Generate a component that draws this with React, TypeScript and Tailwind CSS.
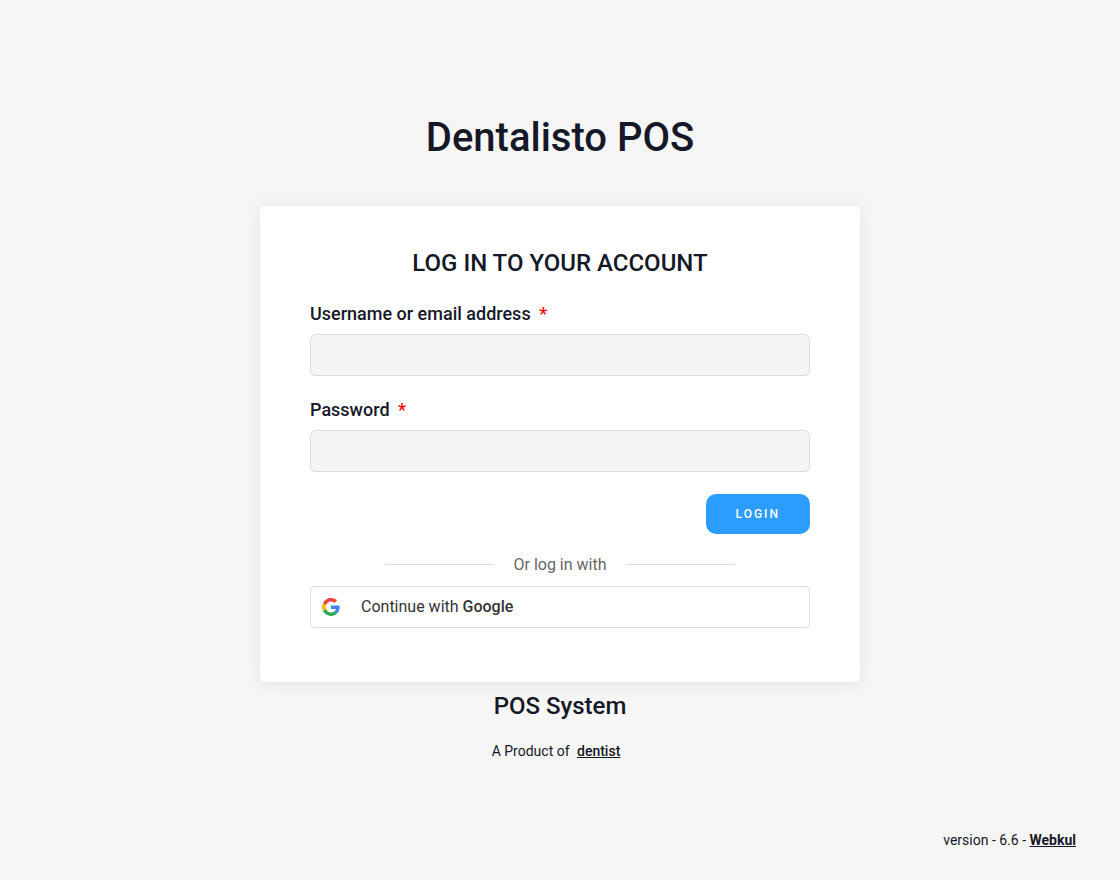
import { useState } from 'react'
import type { FormEvent } from 'react'

type FieldProps = {
  id: string
  label: string
  type: string
  value: string
  onChange: (value: string) => void
}

function Field({ id, label, type, value, onChange }: FieldProps) {
  return (
    <div>
      <label htmlFor={id} className="mb-2 block text-lg leading-6 font-medium">
        {label} <span className="ml-1 text-[#f00]">*</span>
      </label>
      <input
        id={id}
        type={type}
        value={value}
        onChange={e => onChange(e.target.value)}
        className="block h-[42px] w-full rounded-[5px] border border-[#ddd] bg-[#f5f5f5] px-3 outline-none"
      />
    </div>
  )
}

function GoogleIcon() {
  return (
    <svg viewBox="-2.7 -2.7 53.4 53.4" className="h-5 w-5" aria-hidden="true">
      <path fill="#ea4335" d="M24 9.5c3.54 0 6.71 1.22 9.21 3.6l6.85-6.85C35.9 2.38 30.47 0 24 0 14.62 0 6.51 5.38 2.56 13.22l7.98 6.19C12.43 13.72 17.74 9.5 24 9.5z" />
      <path fill="#4285f4" d="M46.98 24.55c0-1.57-.15-3.09-.38-4.55H24v9.02h12.94c-.58 2.96-2.26 5.48-4.78 7.18l7.73 6c4.51-4.18 7.09-10.36 7.09-17.65z" />
      <path fill="#fbbc05" d="M10.53 28.59c-.48-1.45-.76-2.99-.76-4.59s.27-3.14.76-4.59l-7.98-6.19C.92 16.46 0 20.12 0 24c0 3.88.92 7.54 2.56 10.78l7.97-6.19z" />
      <path fill="#34a853" d="M24 48c6.48 0 11.93-2.13 15.89-5.81l-7.73-6c-2.15 1.45-4.92 2.3-8.16 2.3-6.26 0-11.57-4.22-13.47-9.91l-7.98 6.19C6.51 42.62 14.62 48 24 48z" />
    </svg>
  )
}

export default function App() {
  const [username, setUsername] = useState('')
  const [password, setPassword] = useState('')

  function handleSubmit(e: FormEvent) {
    e.preventDefault()
  }

  return (
    <div className="flex min-h-screen flex-col bg-[#f6f6f6] px-4 font-[Roboto,sans-serif] text-[#151826]">
      <main className="mx-auto w-full max-w-[600px] flex-1 pt-28">
        <h1 className="mb-[42px] text-center text-[40px] leading-[52px] font-medium">Dentalisto POS</h1>

        <div className="rounded-[5px] bg-white px-[50px] pt-10 pb-[54px] shadow-[0_2px_16px_rgba(0,0,0,0.08)]">
          <h2 className="mb-[22px] text-center text-2xl leading-[34px] font-medium">LOG IN TO YOUR ACCOUNT</h2>

          <form onSubmit={handleSubmit} className="flex flex-col gap-[22px]">
            <Field id="username" label="Username or email address" type="text" value={username} onChange={setUsername} />
            <Field id="password" label="Password" type="password" value={password} onChange={setPassword} />
            <button
              type="submit"
              className="h-10 self-end rounded-[10px] bg-[#2a9dff] px-[30px] text-xs font-medium tracking-[2px] text-white"
            >
              LOGIN
            </button>
          </form>

          <div className="mx-auto mt-[18px] mb-[9px] flex max-w-[350px] items-center gap-[19px] leading-[25px] text-[#666]">
            <span className="h-px flex-1 bg-[#ddd]" />
            <span>Or log in with</span>
            <span className="h-px flex-1 bg-[#ddd]" />
          </div>

          <button
            type="button"
            className="flex h-[42px] w-full items-center gap-5 rounded border border-[#ddd] bg-white px-[10px] text-[#333]"
          >
            <GoogleIcon />
            <span>Continue with <b className="font-medium">Google</b></span>
          </button>
        </div>

        <footer className="mt-2 text-center">
          <h3 className="text-2xl font-medium">POS System</h3>
          <p className="mt-[19px] text-sm">
            A Product of <a href="#dentist" className="mr-2 ml-1 font-medium underline">dentist</a>
          </p>
        </footer>
      </main>

      <p className="mr-7 mb-[30px] text-right text-sm">
        version - 6.6 - <a href="#webkul" className="font-bold underline">Webkul</a>
      </p>
    </div>
  )
}
